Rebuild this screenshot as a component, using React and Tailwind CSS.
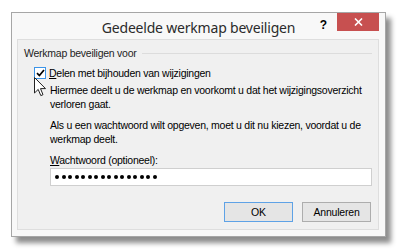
import React from 'react'

const UI_FONT = { fontFamily: '"Liberation Sans", Arial, sans-serif' }

function Cursor() {
  return (
    <svg
      width="13"
      height="20"
      viewBox="0 0 13 20"
      className="absolute left-[34px] top-[77px]"
    >
      <path
        d="M0.5 0.5 L0.5 16 L4.2 12.4 L6.8 18.6 L9 17.7 L6.5 11.6 L11.5 11.6 Z"
        fill="#fff"
        stroke="#222"
        strokeWidth="1"
        strokeLinejoin="round"
      />
    </svg>
  )
}

function Button({ children, focused }) {
  return (
    <button
      className={`h-[20px] w-[69px] text-[10.5px] tracking-[-0.2px] text-black bg-[#e5e5e5] border ${
        focused ? 'border-[#5ea2e6]' : 'border-[#adadad]'
      }`}
    >
      {children}
    </button>
  )
}

export default function App() {
  return (
    <div className="relative w-[401px] h-[252px] bg-white pt-[12px] pl-[11px]" style={UI_FONT}>
      <div className="w-[375px] h-[225px] border border-[#a6a6a6] bg-[#f8f8f8] flex flex-col shadow-[5px_6px_5px_rgba(0,0,0,0.45)]">
        {/* title bar */}
        <div className="relative h-[26px] shrink-0 flex items-center justify-center">
          <span
            className="text-[14px] tracking-[-0.2px] text-[#2b2b2b] pt-[3px]"
            style={{ fontFamily: '"Noto Sans", "Open Sans", sans-serif' }}
          >
            Gedeelde werkmap beveiligen
          </span>
          <div className="absolute right-[6px] top-0 flex items-start">
            <span className="mr-[10px] mt-[3px] text-[12px] font-bold text-black">?</span>
            <div className="w-[42px] h-[18px] bg-[#c75050] flex items-center justify-center">
              <svg width="9" height="8" viewBox="0 0 9 8">
                <path d="M1 0.5 L8 7.5 M8 0.5 L1 7.5" stroke="#fff" strokeWidth="1.6" />
              </svg>
            </div>
          </div>
        </div>

        {/* content panel */}
        <div className="flex-1 ml-[5px] mr-[6px] mb-[6px] border border-[#dedede] bg-[#f0f0f0] px-[6px] pt-[6px] text-[10.5px] tracking-[-0.25px] leading-[14px] text-black">
          <div className="flex items-center gap-[5px]">
            <span className="text-[#1e1e1e]">Werkmap beveiligen voor</span>
            <div className="flex-1 h-px bg-[#dcdcdc]" />
          </div>

          <div className="mt-[6px] ml-[10px] flex items-center gap-[3px]">
            <div className="w-[12px] h-[12px] border border-[#3c94e8] bg-white flex items-center justify-center">
              <svg width="9" height="8" viewBox="0 0 9 8">
                <path d="M1 4.2 L3.4 6.6 L8 1" stroke="#000" strokeWidth="1.7" fill="none" />
              </svg>
            </div>
            <span>
              <span className="underline">D</span>elen met bijhouden van wijzigingen
            </span>
          </div>

          <div className="ml-[26px]">
            <p className="mt-[3px] mr-[4px]">
              Hiermee deelt u de werkmap en voorkomt u dat het wijzigingsoverzicht verloren gaat.
            </p>
            <p className="mt-[7px] mr-[4px]">
              Als u een wachtwoord wilt opgeven, moet u dit nu kiezen, voordat u de werkmap deelt.
            </p>
            <p className="mt-[7px]">
              <span className="underline">W</span>achtwoord (optioneel):
            </p>
            <div className="mt-[1px] h-[18px] bg-white border border-[#cfcfcf] flex items-center gap-[2.5px] pl-[4px]">
              {Array.from({ length: 16 }).map((_, i) => (
                <span key={i} className="w-[4px] h-[4px] rounded-full bg-black" />
              ))}
            </div>
          </div>

          <div className="mt-[16px] mr-[1px] flex justify-end gap-[9px]">
            <Button focused>OK</Button>
            <Button>Annuleren</Button>
          </div>
        </div>
      </div>
      <Cursor />
    </div>
  )
}
